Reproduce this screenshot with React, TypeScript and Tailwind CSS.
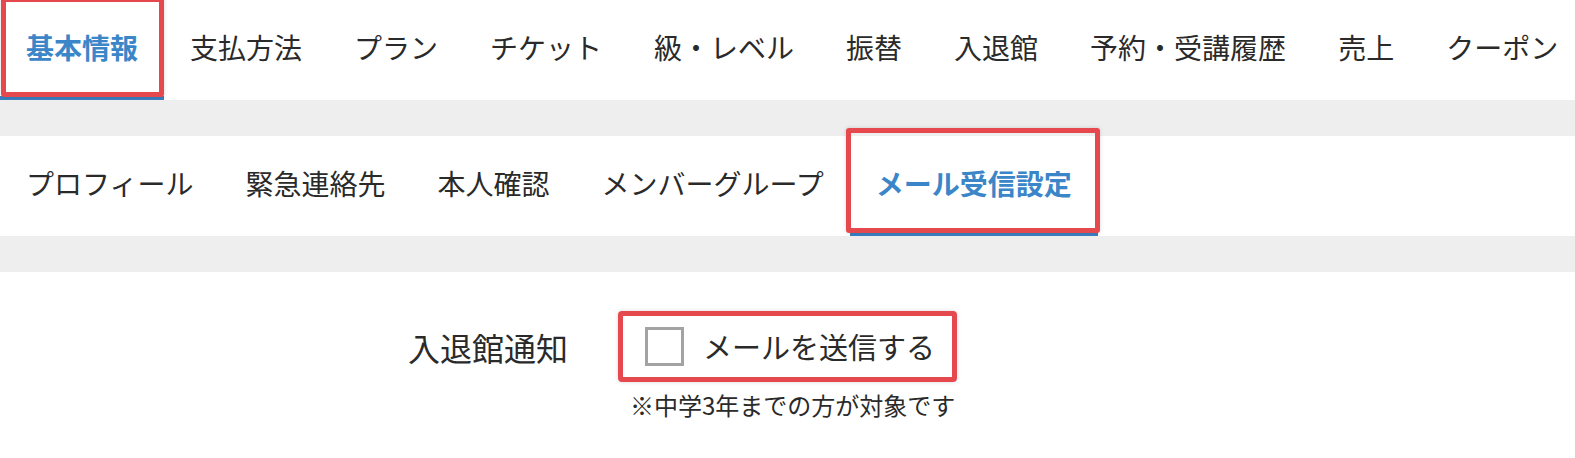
import React from "react";

const mainTabs = ["基本情報", "支払方法", "プラン", "チケット", "級・レベル", "振替", "入退館", "予約・受講履歴", "売上", "クーポン"];
const subTabs = ["プロフィール", "緊急連絡先", "本人確認", "メンバーグループ", "メール受信設定"];

function Tab({ label, active, boxClass }: { label: string; active: boolean; boxClass?: string }) {
  return (
    <div
      className={
        "relative h-full shrink-0 px-[26px] flex items-center text-[28px] leading-none whitespace-nowrap " +
        (active ? "font-bold text-[#3b86c8]" : "text-[#2a2a2a]")
      }
    >
      <span className="pb-[6px]">{label}</span>
      {active && <div className="absolute left-0 right-0 bottom-0 h-[4px] bg-[#3a7fc0]" />}
      {active && boxClass && (
        <div className={"absolute border-[5px] border-[#e5484d] rounded-[3px] shadow-[0_0_4px_rgba(0,0,0,0.15)] " + boxClass} />
      )}
    </div>
  );
}

export default function App() {
  return (
    <div className="w-[1575px] h-[458px] bg-white overflow-hidden font-['Noto_Sans_CJK_JP',sans-serif] text-[#2a2a2a]">
      <nav className="flex h-[100px] overflow-hidden">
        {mainTabs.map((t, i) => (
          <Tab key={t} label={t} active={i === 0} boxClass="top-[-3px] left-[1px] right-0 bottom-[3px]" />
        ))}
      </nav>
      <div className="h-[36px] bg-[#eeeeee]" />
      <nav className="flex h-[100px] relative">
        {subTabs.map((t, i) => (
          <Tab key={t} label={t} active={i === 4} boxClass="top-[-8px] left-[-4px] right-[-2px] bottom-[3px]" />
        ))}
      </nav>
      <div className="h-[36px] bg-[#eeeeee]" />
      <div className="flex pt-[39px]">
        <div className="w-[628px] shrink-0 pl-[408px] h-[71px] flex items-center text-[32px] leading-none text-[#2a2a2a]">
          入退館通知
        </div>
        <div className="flex flex-col">
          <div className="relative ml-[17px] h-[71px] flex items-center">
            <div className="w-[39px] h-[39px] border-[3px] border-[#a3a3a3] bg-white" />
            <span className="ml-[19px] text-[29px] leading-none text-[#2a2a2a]">メールを送信する</span>
            <div className="absolute top-0 bottom-0 left-[-27px] w-[339px] border-[5px] border-[#e5484d] rounded-[4px] shadow-[0_0_4px_rgba(0,0,0,0.15)]" />
          </div>
          <p className="mt-[7px] ml-[2px] text-[24px] leading-[32px] text-[#2a2a2a]">※中学3年までの方が対象です</p>
        </div>
      </div>
    </div>
  );
}
